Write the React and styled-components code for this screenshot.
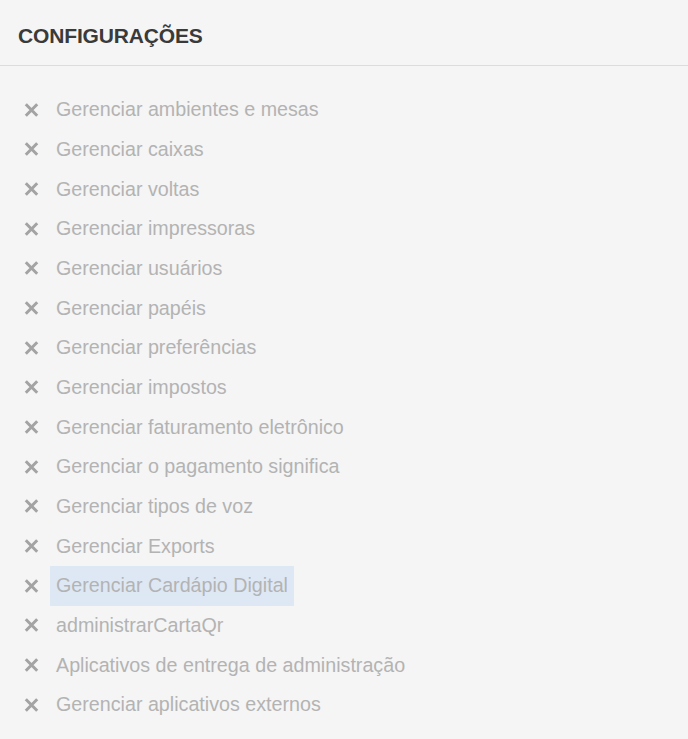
import React from 'react';
import styled, { createGlobalStyle } from 'styled-components';

const GlobalStyle = createGlobalStyle`
  html, body {
    margin: 0;
    padding: 0;
    background: #f5f5f5;
  }
  body {
    font-family: "Liberation Sans", Arial, sans-serif;
  }
`;

const items = [
  'Gerenciar ambientes e mesas',
  'Gerenciar caixas',
  'Gerenciar voltas',
  'Gerenciar impressoras',
  'Gerenciar usuários',
  'Gerenciar papéis',
  'Gerenciar preferências',
  'Gerenciar impostos',
  'Gerenciar faturamento eletrônico',
  'Gerenciar o pagamento significa',
  'Gerenciar tipos de voz',
  'Gerenciar Exports',
  'Gerenciar Cardápio Digital',
  'administrarCartaQr',
  'Aplicativos de entrega de administração',
  'Gerenciar aplicativos externos',
];

const Page = () => {
  return (
    <Panel>
      <Header>
        <Title>CONFIGURAÇÕES</Title>
      </Header>
      <List>
        {items.map((label) => (
          <Row key={label}>
            <Cross viewBox="0 0 15 14" aria-hidden="true">
              <path d="M1.8 1.3 L13.2 12.7 M13.2 1.3 L1.8 12.7" />
            </Cross>
            <Label $selected={label === 'Gerenciar Cardápio Digital'}>{label}</Label>
          </Row>
        ))}
      </List>
    </Panel>
  );
};

const Panel = styled.div`
  width: 688px;
  min-height: 739px;
  background: #f5f5f5;
`;

const Header = styled.div`
  height: 66px;
  display: flex;
  align-items: center;
  padding: 6px 18px 0;
  box-sizing: border-box;
  border-bottom: 1px solid #dcdcdc;
`;

const Title = styled.h1`
  margin: 0;
  font-size: 21px;
  font-weight: 700;
  color: #3a3a3a;
  letter-spacing: -0.15px;
`;

const List = styled.ul`
  list-style: none;
  margin: 0;
  padding: 24px 0 0 24px;
`;

const Row = styled.li`
  display: flex;
  align-items: center;
  height: 39.67px;
`;

const Cross = styled.svg`
  width: 15px;
  height: 14px;
  flex: none;
  stroke: #a3a3a3;
  stroke-width: 3;
  fill: none;
  margin-right: 11px;
`;

const Label = styled.span`
  display: flex;
  align-items: center;
  height: 100%;
  padding: 0 6px;
  font-size: 19.7px;
  color: #b3b3b3;
  background: ${(p) => (p.$selected ? '#dee8f5' : 'transparent')};
`;

export default function App() {
  return (
    <>
      <GlobalStyle />
      <Page />
    </>
  );
}
